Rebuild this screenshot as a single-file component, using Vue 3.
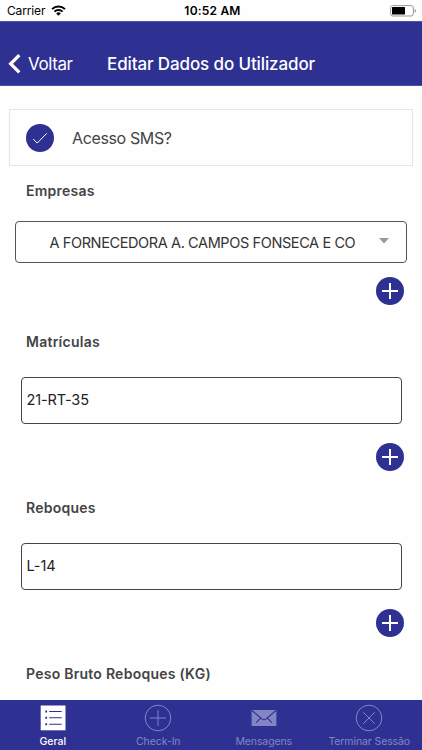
<script setup>
const fields = [
  { label: 'Matrículas', value: '21-RT-35', cls: 'plate' },
  { label: 'Reboques', value: 'L-14', cls: 'trailer' },
]
</script>

<template>
  <div class="screen">
    <div class="status">
      <div class="carrier">
        <span class="carrier-name">Carrier</span>
        <svg width="15" height="11" viewBox="0 0 15 11">
          <g fill="none" stroke="#000" stroke-width="2">
            <path d="M1 4.1a9.3 9.3 0 0 1 13 0" />
            <path d="M3.4 6.6a5.9 5.9 0 0 1 8.2 0" />
          </g>
          <path d="M7.5 10.7L5.2 8.4a3.3 3.3 0 0 1 4.6 0z" />
        </svg>
      </div>
      <span class="time">10:52 AM</span>
      <svg class="battery" width="27" height="12" viewBox="0 0 27 12">
        <rect x=".6" y=".6" width="22.8" height="10.4" rx="2.3" fill="#fff" stroke="#999" />
        <rect x="2" y="2" width="13" height="7.6" rx=".6" />
        <path d="M24.7 4v3.7q1.4-.4 1.4-1.85T24.7 4z" fill="#999" />
      </svg>
    </div>

    <header class="nav">
      <button class="back">
        <svg width="13" height="20" viewBox="0 0 13 20">
          <path d="M11.3 1.2L2.7 9.8l8.6 8.6" fill="none" stroke="#fff" stroke-width="3.3" />
        </svg>
        <span>Voltar</span>
      </button>
      <h1>Editar Dados do Utilizador</h1>
    </header>

    <main>
      <div class="check-row">
        <svg width="28" height="28" viewBox="0 0 28 28">
          <circle cx="14" cy="14" r="14" fill="#2e3192" />
          <path d="M7.2 15l4 4.1 9.6-9.8" fill="none" stroke="#fff" stroke-width="1" />
        </svg>
        <span>Acesso SMS?</span>
      </div>

      <section class="company">
        <h2>Empresas</h2>
        <div class="select">
          <span>A FORNECEDORA A. CAMPOS FONSECA E CO</span>
          <svg width="10" height="6" viewBox="0 0 10 6"><path d="M0 0h10L5 5.5z" fill="#999" /></svg>
        </div>
        <button class="add" aria-label="+">
          <svg width="28" height="28" viewBox="0 0 28 28">
            <circle cx="14" cy="14" r="14" fill="#2e3192" />
            <path d="M14 6v16M6 14h16" stroke="#fff" stroke-width="2" />
          </svg>
        </button>
      </section>

      <section v-for="f in fields" :key="f.label" class="field">
        <h2>{{ f.label }}</h2>
        <div class="input"><span :class="f.cls">{{ f.value }}</span></div>
        <button class="add" aria-label="+">
          <svg width="28" height="28" viewBox="0 0 28 28">
            <circle cx="14" cy="14" r="14" fill="#2e3192" />
            <path d="M14 6v16M6 14h16" stroke="#fff" stroke-width="2" />
          </svg>
        </button>
      </section>

      <section class="field">
        <h2>Peso Bruto Reboques (KG)</h2>
      </section>
    </main>

    <nav class="tabs">
      <div class="tab active">
        <svg width="28" height="28" viewBox="0 0 28 28">
          <rect x="1.7" y="1.5" width="24.8" height="24.8" fill="#fff" />
          <path d="M10.2 7.5h12.5M10.2 13.8h12.5M10.2 20.2h12.5" stroke="#2e3192" stroke-width="1.1" />
          <path d="M6.3 7.5h1.8M6.3 13.8h1.8M6.3 20.2h1.8" stroke="#2e3192" stroke-width="1.9" />
        </svg>
        <span>Geral</span>
      </div>
      <div class="tab checkin">
        <svg width="28" height="28" viewBox="0 0 28 28" fill="none" stroke="currentColor">
          <circle cx="14" cy="14" r="12.8" />
          <path d="M14 6v16M6 14h16" />
        </svg>
        <span>Check-In</span>
      </div>
      <div class="tab messages">
        <svg width="28" height="28" viewBox="0 0 28 28">
          <rect x="1.6" y="6" width="24.8" height="16" fill="currentColor" />
          <path d="M2 6.5l9.8 8.4q2.2 1.6 4.4 0L26 6.5M6.2 18.7l4.8-5M21.8 18.7l-4.8-5" fill="none" stroke="#2e3192" stroke-width="1.1" />
        </svg>
        <span>Mensagens</span>
      </div>
      <div class="tab logout">
        <svg width="28" height="28" viewBox="0 0 28 28" fill="none" stroke="currentColor">
          <circle cx="14" cy="14" r="12.8" />
          <path d="M8.2 8.2l11.6 11.6M19.8 8.2L8.2 19.8" />
        </svg>
        <span>Terminar Sessão</span>
      </div>
    </nav>
  </div>
</template>

<style>
body { margin: 0; background: #fefefe; }
</style>

<style scoped>
* { box-sizing: border-box; }
.screen {
  width: 422px; height: 750px; overflow: hidden;
  display: flex; flex-direction: column;
  background: #fefefe; color: #444;
  font-family: Inter, "Liberation Sans", sans-serif;
  white-space: nowrap;
}
svg { display: block; flex: none; }
button { border: 0; padding: 0; background: none; font: inherit; color: inherit; }
h1, h2 { margin: 0; }
.status {
  height: 21px; flex: none; padding: 0 5px 0 7px;
  display: grid; grid-template-columns: 1fr auto 1fr; align-items: center;
  color: #000; font-size: 12px;
}
.carrier { display: flex; align-items: center; gap: 5px; }
.carrier-name { width: 39px; letter-spacing: -.15px; }
.time { font-weight: 600; letter-spacing: .2px; padding-left: 1px; }
.battery { justify-self: end; }
.nav {
  height: 65px; flex: none; padding: 20px 0 0 8px;
  display: flex; align-items: center;
  background: #2e3192; color: #fff; border-top: 1px solid #4a55b0; border-bottom: 1px solid #3b55b5;
}
.back { display: flex; align-items: center; gap: 7px; width: 99px; font-size: 17px; letter-spacing: -.4px; }
h1 { font-size: 17px; font-weight: 500; letter-spacing: -.12px; }
main { flex: 1; min-height: 0; overflow: hidden; padding-top: 23px; }
.check-row {
  height: 57px; margin: 0 9px; padding-left: 16px; border: 1.5px solid #e5e5e5;
  display: flex; align-items: center; gap: 18px; font-size: 16px; letter-spacing: -.37px;
}
h2 { margin-left: 26px; height: 20px; line-height: 20px; font-size: 14px; font-weight: 600; letter-spacing: .25px; }
.company { height: 151px; padding-top: 15px; }
.select {
  height: 42px; margin: 20px 15px 0; padding: 0 17px 0 33.5px;
  display: flex; align-items: center; justify-content: space-between;
  border: 1.3px solid #555; border-radius: 4px; color: #333; font-size: 14.5px; letter-spacing: -.39px;
}
.select svg { margin-top: -2px; }
.add { display: block; margin: 14px 18px 0 auto; }
.field { height: 166px; padding-top: 15px; }
.input {
  height: 47px; margin: 25px 20.5px 0; padding: 0 5px 2px;
  display: flex; align-items: center;
  border: 1.3px solid #444; border-radius: 4px; color: #222; font-size: 14.5px; letter-spacing: -.12px;
}
.input + .add { margin-top: 19px; }
.tabs {
  height: 50px; flex: none; display: grid; grid-template-columns: repeat(4, 1fr);
  background: #2e3192; border-top: 1px solid #2038a0; color: #8285c1;
}
.tab { display: flex; flex-direction: column; align-items: center; padding-top: 3px; }
.tab span { margin-top: 3px; font-size: 10.5px; line-height: 14px; }
.checkin span { letter-spacing: -.08px; }
.messages span { letter-spacing: -.12px; }
.logout span { letter-spacing: -.1px; }
.messages span { letter-spacing: -.12px; }
.active { color: #fff; }
.active span { font-weight: 500; }
</style>
